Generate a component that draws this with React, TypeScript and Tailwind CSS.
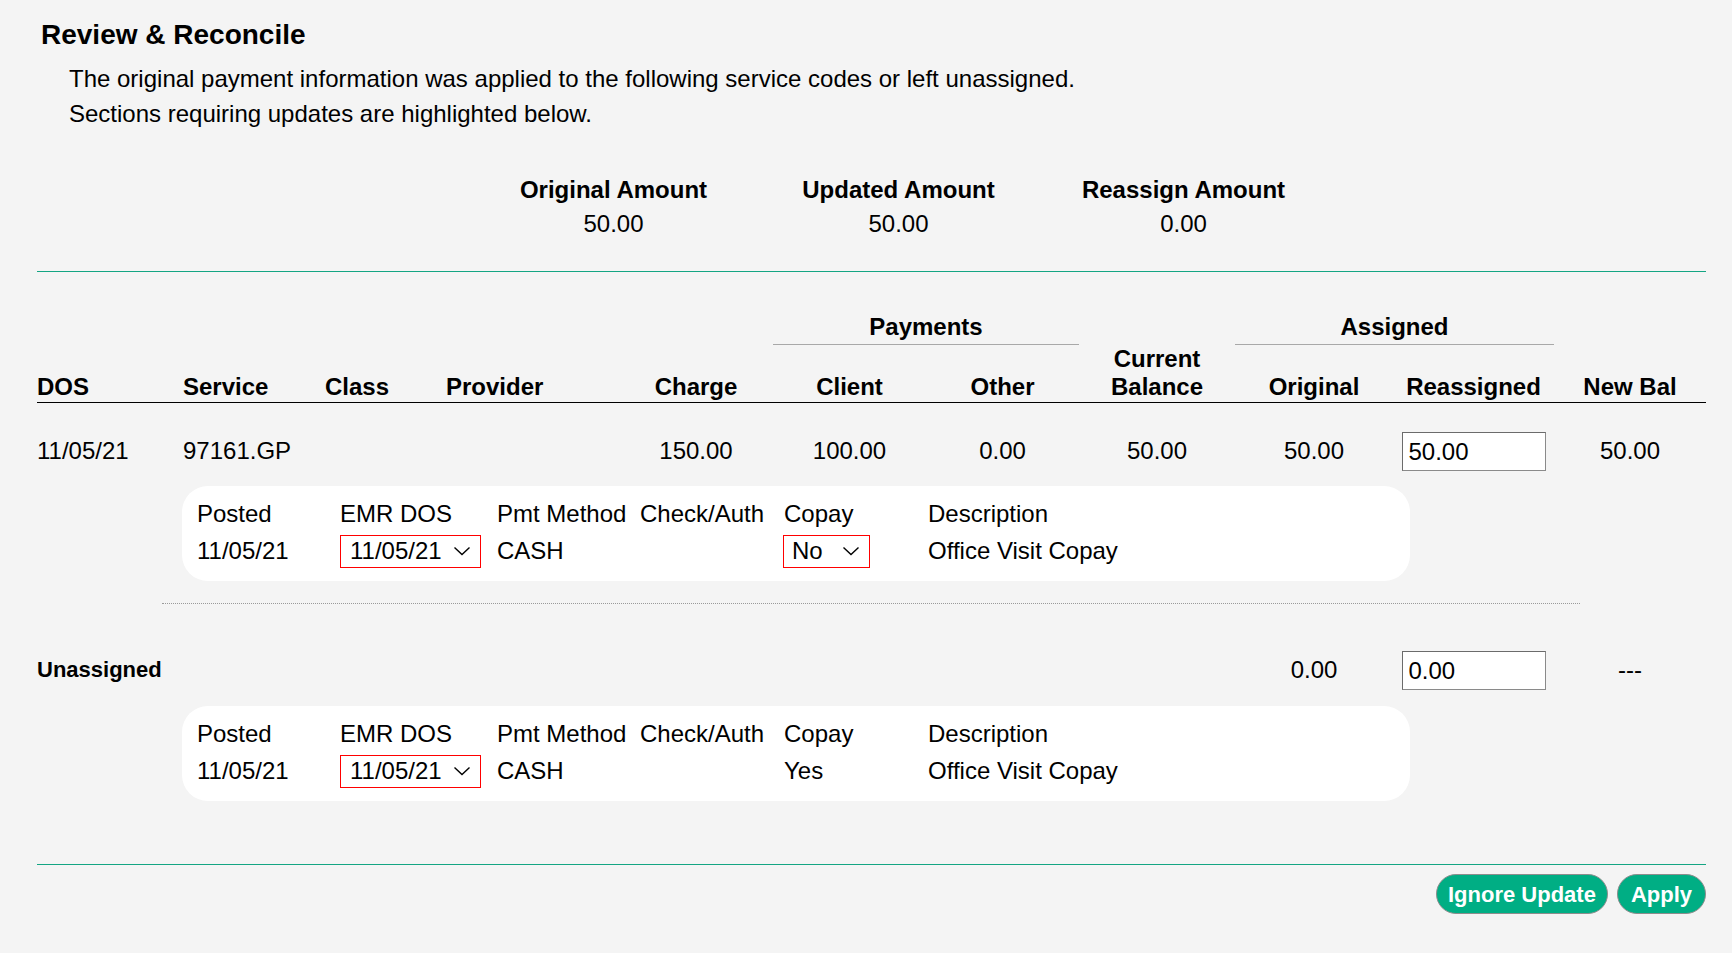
import React from "react"

const cols =
    "grid w-[1669px] grid-cols-[146px_142px_121px_173px_154px_153px_153px_156px_158px_161px_152px]"

function Chevron() {
    return (
        <svg width="18" height="10" viewBox="0 0 18 10" className="shrink-0">
            <path d="M1.5 1.5l7.5 7 7.5-7" fill="none" stroke="#000" strokeWidth="1.4" />
        </svg>
    )
}

function AmountInput({ value }: { value: string }) {
    return (
        <div className="flex justify-center">
            <div className="h-[39px] w-[144px] border border-[#8a8a8a] border-t-[#6b6b6b] border-l-[#6b6b6b] bg-white pl-[6px] leading-[37px]">
                {value}
            </div>
        </div>
    )
}

function DetailCard({ highlightCopay }: { highlightCopay: boolean }) {
    return (
        <div className="ml-[145px] w-[1228px] rounded-[26px] bg-white pt-[13px] pb-[13px] pl-[15px]">
            <div className="flex leading-[30px]">
                <div className="w-[143px]">Posted</div>
                <div className="w-[157px]">EMR DOS</div>
                <div className="w-[143px]">Pmt Method</div>
                <div className="w-[144px]">Check/Auth</div>
                <div className="w-[144px]">Copay</div>
                <div>Description</div>
            </div>
            <div className="mt-[6px] flex h-[33px] items-start leading-[31px]">
                <div className="w-[143px]">11/05/21</div>
                <div className="w-[157px]">
                    <div className="flex h-[33px] w-[141px] items-start justify-between border border-[#f00] pr-[9px] pb-[1px] pl-[9px] leading-[30px]">
                        <span>11/05/21</span>
                        <span className="mt-[10px]"><Chevron /></span>
                    </div>
                </div>
                <div className="w-[143px]">CASH</div>
                <div className="w-[144px]"></div>
                <div className="w-[144px]">
                    {highlightCopay ? (
                        <div className="-ml-px flex h-[33px] w-[87px] items-start justify-between border border-[#f00] pr-[9px] pb-[1px] pl-[8px] leading-[30px]">
                            <span>No</span>
                            <span className="mt-[10px]"><Chevron /></span>
                        </div>
                    ) : (
                        "Yes"
                    )}
                </div>
                <div>Office Visit Copay</div>
            </div>
        </div>
    )
}

export default function App() {
    return (
        <div className="min-h-[953px] w-[1732px] bg-[#f4f4f4] px-[37px] pt-[19px] font-['Liberation_Sans',Arial,sans-serif] text-[24px] text-black">
            <h3 className="ml-[4px] text-[28px] leading-[32px] font-bold">Review &amp; Reconcile</h3>
            <div className="mt-[10px] ml-[32px] leading-[35px]">
                <p>The original payment information was applied to the following service codes or left unassigned.</p>
                <p>Sections requiring updates are highlighted below.</p>
            </div>

            {/* totals */}
            <div className="mt-[42px] ml-[434px] flex leading-[34px]">
                {[
                    ["Original Amount", "50.00"],
                    ["Updated Amount", "50.00"],
                    ["Reassign Amount", "0.00"],
                ].map(([label, amt]) => (
                    <div key={label} className="w-[285px] text-center">
                        <div className="font-bold">{label}</div>
                        <div>{amt}</div>
                    </div>
                ))}
            </div>

            <div className="mt-[30px] h-px w-[1669px] bg-[#14a583]"></div>

            {/* group headings */}
            <div className={`${cols} mt-[41px] font-bold leading-[28px]`}>
                <div className="col-span-2 col-start-6 border-b border-[#a8a8a8] pb-[3px] text-center">Payments</div>
                <div className="col-span-2 col-start-9 border-b border-[#a8a8a8] pb-[3px] text-center">Assigned</div>
            </div>
            <div className={`${cols} items-end border-b border-black pb-px font-bold leading-[28px]`}>
                <div>DOS</div>
                <div>Service</div>
                <div>Class</div>
                <div>Provider</div>
                <div className="text-center">Charge</div>
                <div className="text-center">Client</div>
                <div className="text-center">Other</div>
                <div className="text-center">
                    Current
                    <br />
                    Balance
                </div>
                <div className="text-center">Original</div>
                <div className="text-center">Reassigned</div>
                <div className="text-center">New Bal</div>
            </div>

            {/* service row */}
            <div className={`${cols} mt-[28px] h-[39px] items-center leading-[40px]`}>
                <div>11/05/21</div>
                <div>97161.GP</div>
                <div></div>
                <div></div>
                <div className="text-center">150.00</div>
                <div className="text-center">100.00</div>
                <div className="text-center">0.00</div>
                <div className="text-center">50.00</div>
                <div className="text-center">50.00</div>
                <AmountInput value="50.00" />
                <div className="text-center">50.00</div>
            </div>
            <div className="mt-[16px]">
                <DetailCard highlightCopay={true} />
            </div>

            <div className="mt-[22px] ml-[125px] w-[1418px] border-t border-dotted border-[#9a9a9a]"></div>

            {/* unassigned row */}
            <div className={`${cols} mt-[46px] h-[39px] items-center leading-[40px]`}>
                <div className="col-span-4 text-[22px] font-bold">Unassigned</div>
                <div className="col-start-9 text-center">0.00</div>
                <AmountInput value="0.00" />
                <div className="text-center">---</div>
            </div>
            <div className="mt-[17px]">
                <DetailCard highlightCopay={false} />
            </div>

            <div className="mt-[63px] h-px w-[1669px] bg-[#14a583]"></div>

            <div className="mt-[9px] flex w-[1669px] justify-end gap-[9px]">
                <button className="h-[40px] rounded-full border border-[#8d8d8d] bg-[#00ae84] px-[11px] text-[22px] font-bold text-white">
                    Ignore Update
                </button>
                <button className="h-[40px] rounded-full border border-[#8d8d8d] bg-[#00ae84] px-[13px] text-[22px] font-bold text-white">
                    Apply
                </button>
            </div>
        </div>
    )
}
